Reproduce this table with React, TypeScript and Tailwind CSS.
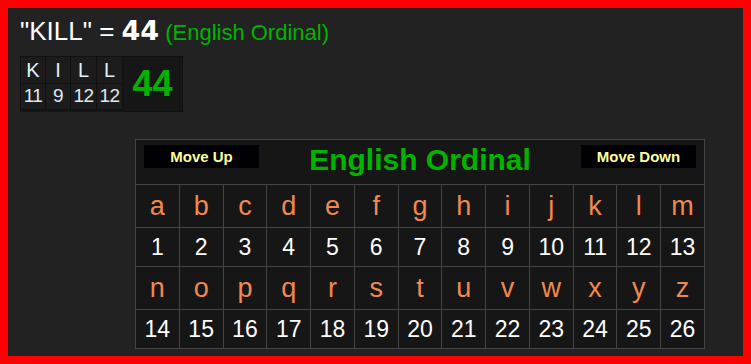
import React from 'react';

const row1 = 'abcdefghijklm'.split('');
const row2 = 'nopqrstuvwxyz'.split('');

const word = [
  { l: 'K', v: 11, w: 'w-[25px]' },
  { l: 'I', v: 9, w: 'w-[25px]' },
  { l: 'L', v: 12, w: 'w-[26px]' },
  { l: 'L', v: 12, w: 'w-[26px]' },
];

const LetterRows: React.FC<{ letters: string[]; start: number }> = ({ letters, start }) => (
  <>
    {letters.map((c) => (
      <div key={c} className="h-[43px] flex items-center justify-center border-r border-b border-[#444] text-[27px] text-[#f0894f]">
        {c}
      </div>
    ))}
    {letters.map((c, i) => (
      <div key={c + 'n'} className="h-[39px] flex items-center justify-center border-r border-b border-[#444] text-[23px] text-white">
        {start + i}
      </div>
    ))}
  </>
);

const MoveButton: React.FC<{ label: string }> = ({ label }) => (
  <button className="mt-[5px] w-[115px] h-[23px] bg-[#000005] text-[15px] font-bold leading-[23px] text-[#ffff99]">
    {label}
  </button>
);

const App: React.FC = () => {
  return (
    <div
      className="w-[751px] h-[364px] border-8 border-[#ff0000] bg-[#222222] overflow-hidden"
      style={{ fontFamily: '"Liberation Sans", Arial, sans-serif' }}
    >
      <div className="pl-3 pt-[8px]">
        {/* Title line */}
        <div className="flex items-baseline h-[30px] leading-[30px]">
          <span className="text-[26px] text-white">"KILL" =&nbsp;</span>
          <span className="text-[27px] font-bold text-white" style={{ fontFamily: '"DejaVu Sans", sans-serif' }}>
            44
          </span>
          <span className="ml-[6px] text-[22px] text-[#00b300]">(English Ordinal)</span>
        </div>

        {/* Word breakdown */}
        <div className="mt-[10px] flex w-fit border-l border-t border-[#111] bg-[#161616]">
          {word.map((w, i) => (
            <div key={i} className={`${w.w} flex flex-col`}>
              <div className="h-[27px] flex items-center justify-center border-r border-b border-[#111] bg-[#1c1c1c] text-[20px] text-[#e0f0ff]">
                {w.l}
              </div>
              <div className="h-[26px] flex items-center justify-center border-r border-b border-[#111] bg-[#1c1c1c] text-[19px] tracking-[-0.5px] text-[#e0e8f0]">
                {w.v}
              </div>
            </div>
          ))}
          <div className="w-[60px] flex items-center justify-center border-r border-b border-[#111] text-[36px] font-bold text-[#00b300]">
            44
          </div>
        </div>

        {/* Cipher chart */}
        <div className="ml-[115px] mt-[27px] w-[570px] border-l border-t border-[#444] bg-[#161616]">
          <div className="h-[45px] flex items-start justify-between border-r border-b border-[#444] px-[8px]">
            <MoveButton label="Move Up" />
            <span className="mt-[3px] text-[30px] font-bold leading-[34px] text-[#00b300]">English Ordinal</span>
            <MoveButton label="Move Down" />
          </div>
          <div className="grid grid-cols-13">
            <LetterRows letters={row1} start={1} />
            <LetterRows letters={row2} start={14} />
          </div>
        </div>
      </div>
    </div>
  );
};

export default App;
